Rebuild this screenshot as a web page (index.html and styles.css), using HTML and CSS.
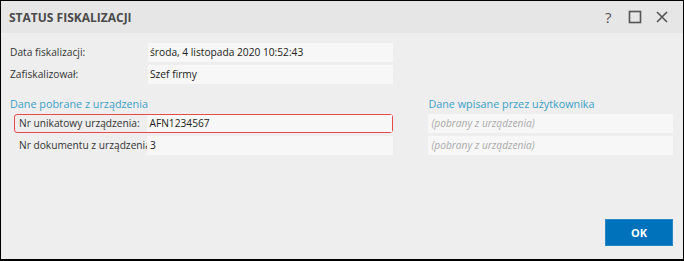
FILE: index.html
```html
<!DOCTYPE html>
<html lang="pl">
<head>
<meta charset="utf-8">
<link rel="stylesheet" href="styles.css">
</head>
<body>
<div class="dialog">
  <div class="titlebar">
    <div class="title">STATUS FISKALIZACJI</div>
    <div class="controls">
      <span class="ctl help">?</span>
      <svg class="ctl" width="14" height="14" viewBox="0 0 14 14"><rect x="1.5" y="1.5" width="11" height="11" fill="none" stroke="#555" stroke-width="1.6"/></svg>
      <svg class="ctl" width="14" height="14" viewBox="0 0 14 14"><path d="M2 2L12 12M12 2L2 12" stroke="#555" stroke-width="1.6" fill="none"/></svg>
    </div>
  </div>
  <div class="content">
    <div class="rows top">
      <div class="row"><div class="label">Data fiskalizacji:</div><div class="value">środa, 4 listopada 2020 10:52:43</div></div>
      <div class="row"><div class="label">Zafiskalizował:</div><div class="value">Szef firmy</div></div>
    </div>
    <div class="sections">
      <div class="section left">
        <div class="heading">Dane pobrane z urządzenia</div>
        <div class="rows">
          <div class="row sub highlight"><div class="label">Nr unikatowy urządzenia:</div><div class="value">AFN1234567</div></div>
          <div class="row sub"><div class="label">Nr dokumentu z urządzenia</div><div class="value">3</div></div>
        </div>
      </div>
      <div class="section right">
        <div class="heading">Dane wpisane przez użytkownika</div>
        <div class="rows">
          <div class="value placeholder">(pobrany z urządzenia)</div>
          <div class="value placeholder">(pobrany z urządzenia)</div>
        </div>
      </div>
    </div>
    <div class="footer"><button class="ok">OK</button></div>
  </div>
</div>
</body>
</html>
```

FILE: styles.css
```css
* { box-sizing: border-box; }
html, body { margin: 0; padding: 0; }
body { font-family: "Open Sans", "Noto Sans", sans-serif; font-size: 10.2px; color: #222; }
.dialog {
  width: 684px; height: 261px;
  border: 1px solid #000;
  border-bottom-width: 2px;
  background: #eeeeee;
  display: flex; flex-direction: column;
}
.titlebar {
  height: 32px; flex: none;
  background: #e6e6e6;
  display: flex; align-items: center; justify-content: space-between;
  padding: 0 14px 0 8px;
}
.title { font-weight: 700; font-size: 12px; color: #4a4a4a; }
.controls { display: flex; align-items: center; gap: 13px; }
.ctl { display: block; }
.help { font-size: 15px; color: #555; line-height: 14px; width: 10px; }
.content { flex: 1; display: flex; flex-direction: column; padding: 10px 10px 0 9px; }
.rows { display: flex; flex-direction: column; gap: 3px; }
.row { display: flex; align-items: stretch; height: 19px; }
.label { width: 138px; flex: none; line-height: 19px; white-space: nowrap; overflow: hidden; color: #333; }
.value { background: #f7f7f7; line-height: 19px; padding-left: 2px; white-space: nowrap; }
.top .value { width: 245px; }
.sections { display: flex; margin-top: 12px; }
.heading { color: #3aa0c8; font-size: 10.8px; height: 18px; line-height: 16px; }
.section.left { width: 384px; }
.section.left .rows { padding-left: 4px; }
.row.sub .label { width: 133px; padding-left: 5px; padding-right: 3px; }
.row.sub .value { flex: 1; padding-left: 3px; }
.row.highlight { border: 1.5px solid #e64b4b; border-radius: 3px; }
.row.highlight .label { line-height: 16px; padding-left: 4px; width: 131.5px; }
.row.highlight .value { line-height: 16px; }
.section.right { margin-left: 35px; width: 245px; }
.placeholder { height: 19px; color: #aaa; font-style: italic; padding-left: 3px; }
.footer { margin-top: auto; display: flex; justify-content: flex-end; padding: 0 0 13px 0; }
.ok {
  width: 68px; height: 27px;
  background: #0072bc; color: #fff; border: 1px solid #2b86c8;
  font-family: "Open Sans", sans-serif; font-weight: 700; font-size: 11px;
}
```
